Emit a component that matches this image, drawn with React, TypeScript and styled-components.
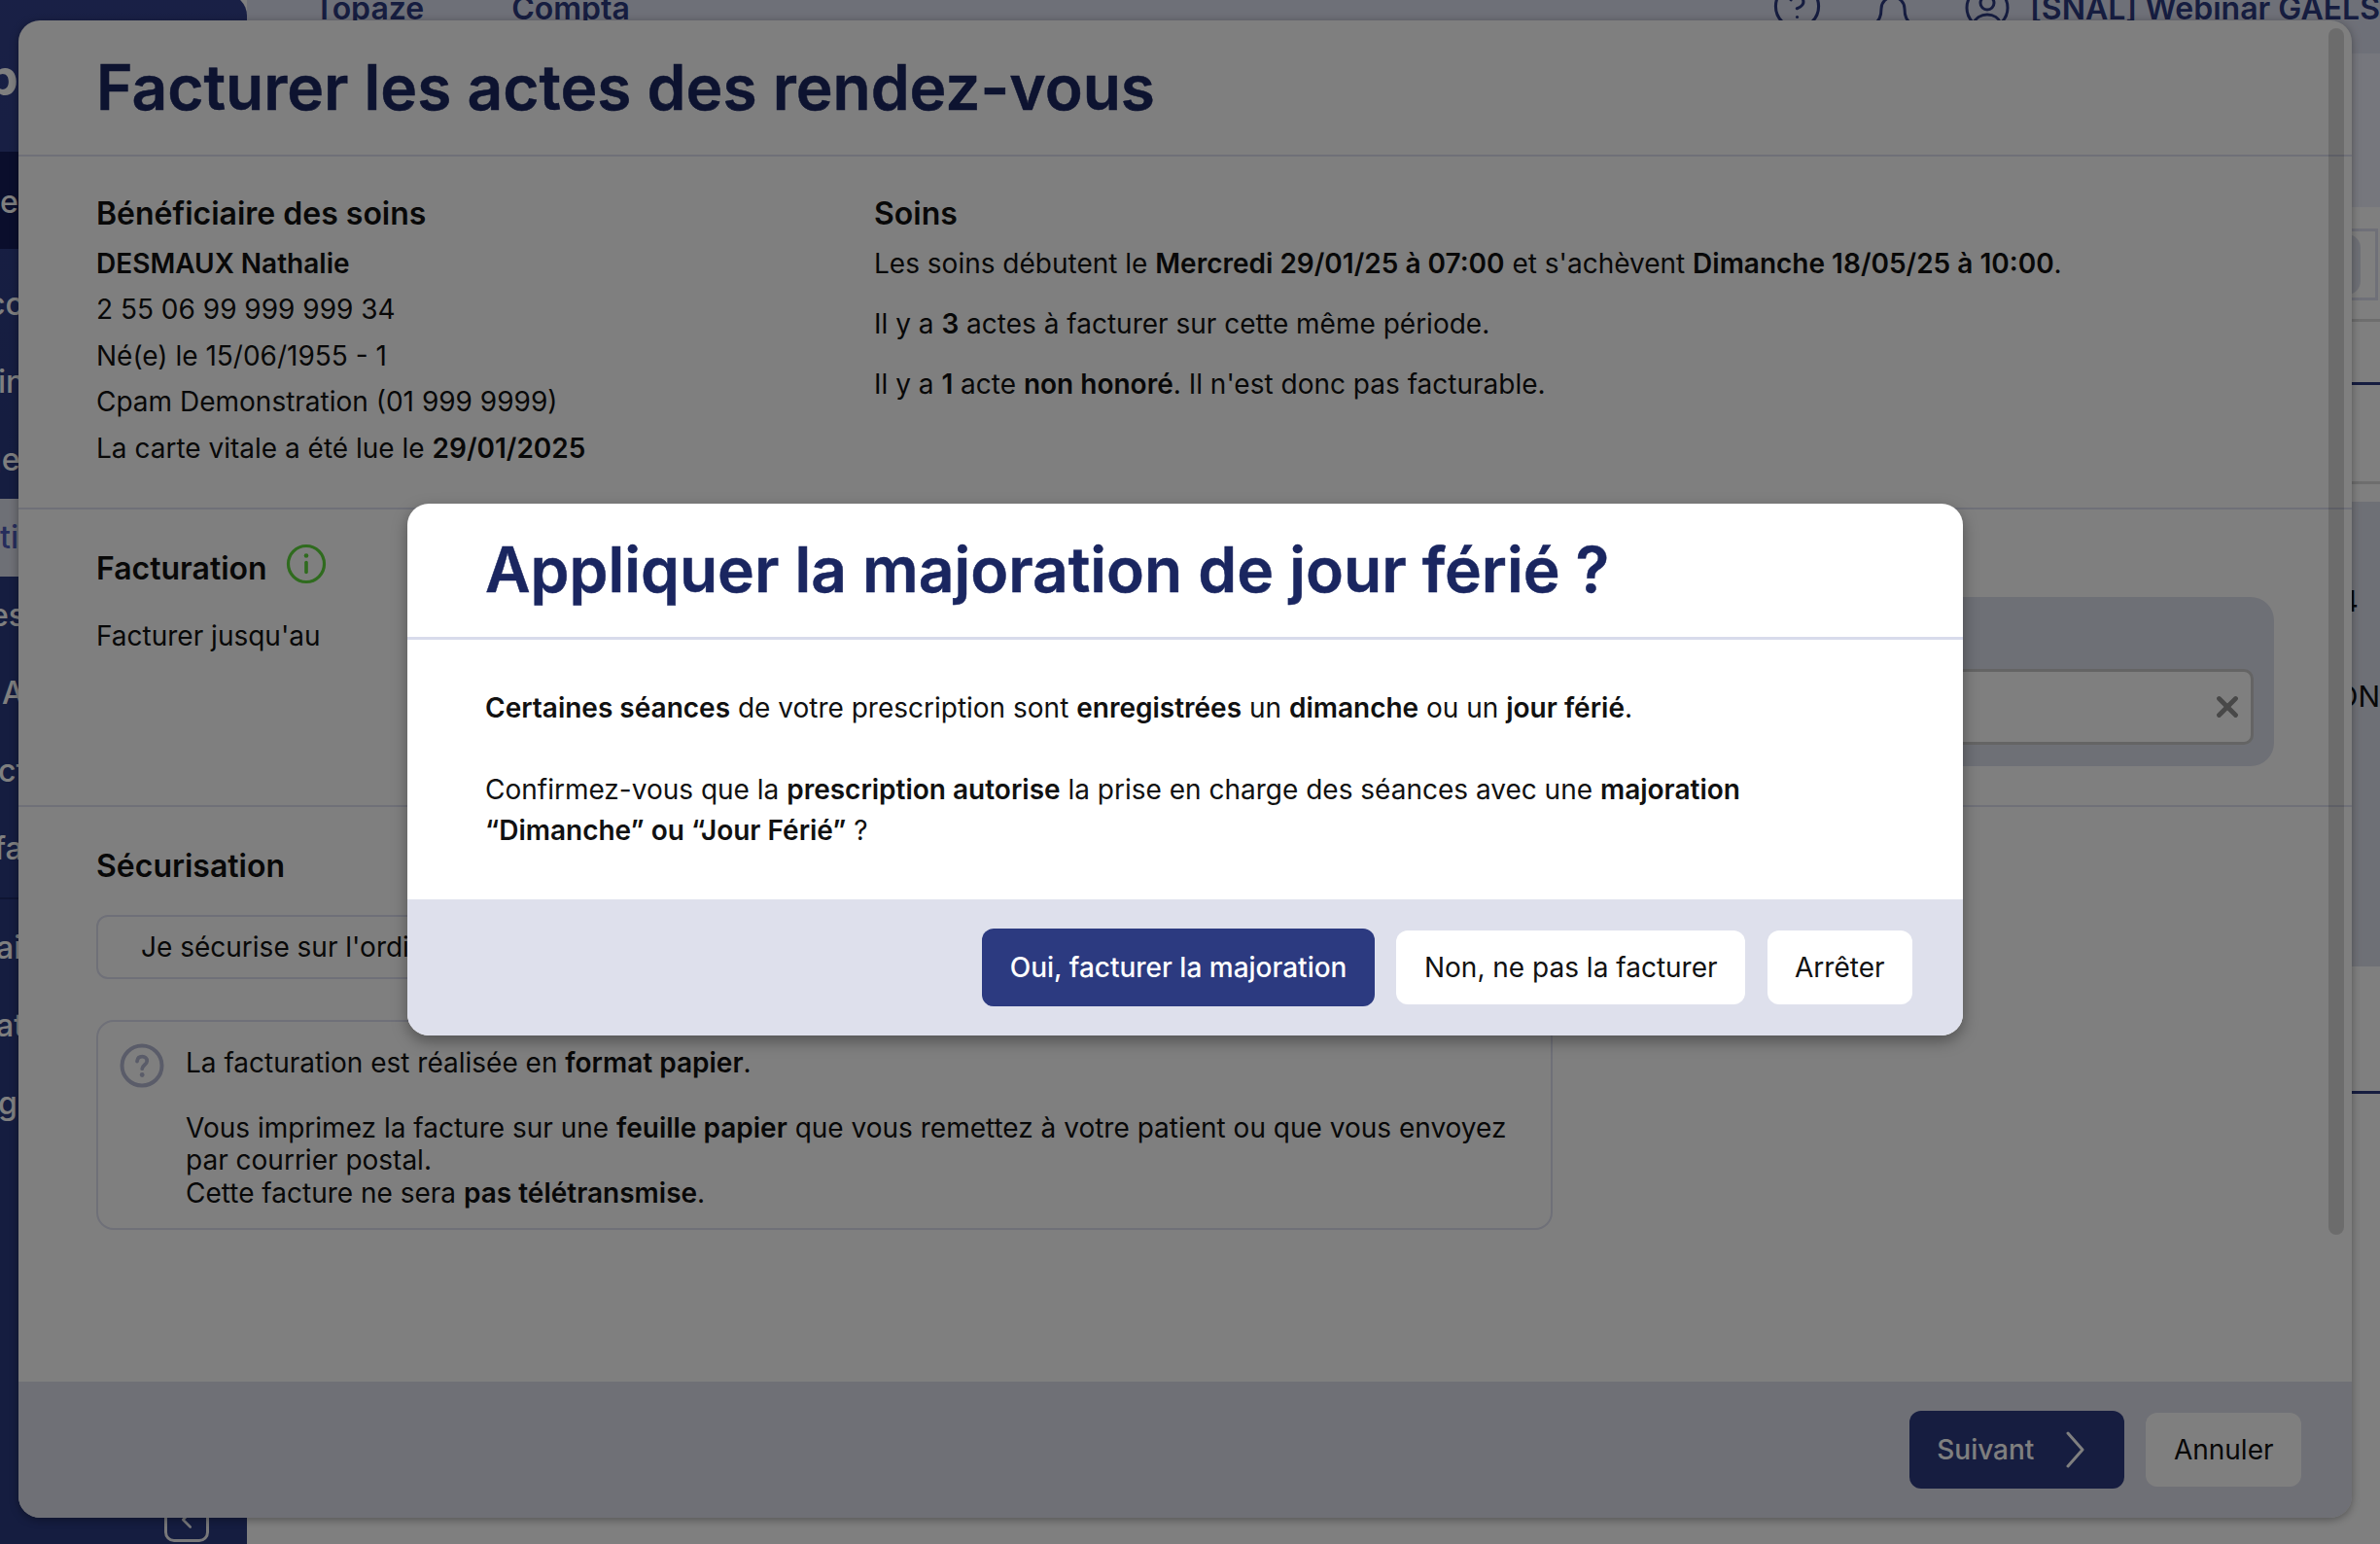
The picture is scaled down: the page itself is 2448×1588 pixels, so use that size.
import React from "react";
import styled, { createGlobalStyle } from "styled-components";
import { Bell, ChevronLeft, CircleHelp, X } from "lucide-react";

const GlobalStyle = createGlobalStyle`
  html, body {
    margin: 0;
    padding: 0;
    background: #fff;
  }
  * {
    box-sizing: border-box;
  }
  body {
    font-family: "Inter", "Liberation Sans", sans-serif;
    color: #111;
  }
`;

const Page = styled.div`
  position: relative;
  display: flex;
  width: 2448px;
  height: 1588px;
  overflow: hidden;
  background: #fff;
`;

/* ---- page behind the modal ---- */

const Sidebar = styled.nav`
  flex: 0 0 254px;
  display: flex;
  flex-direction: column;
  height: 1594px;
  margin-top: -6px;
  background: linear-gradient(#33418c, #2a3a80 30%);
  border-top-right-radius: 22px;
  color: #fff;
  font-size: 32px;
  font-weight: 500;
`;

const Brand = styled.div`
  display: flex;
  align-items: flex-start;
  height: 162px;
  padding-top: 58px;
  font-size: 52px;
  font-weight: 700;
  line-height: 56px;
  text-indent: -14px;
`;

const BrandEdge = styled.span`
  width: 6px;
  height: 38px;
  margin: 14px 0 0 3px;
  border-radius: 3px 0 0 3px;
  background: #c8cad2;
`;

const NavActive = styled.div`
  height: 100px;
  margin-bottom: 17px;
  padding-top: 30px;
  background: #141c58;
  line-height: 44px;
`;

const NavItem = styled.div<{ $indent?: number; $light?: boolean }>`
  height: 80px;
  line-height: 80px;
  text-indent: ${(p) => p.$indent ?? 0}px;
  white-space: nowrap;
  background: ${(p) => (p.$light ? "#dde0ec" : "transparent")};
  color: ${(p) => (p.$light ? "#4d5bb8" : "#fff")};
`;

const NavRule = styled.div`
  height: 2px;
  margin: 10px 0;
  background: #1e2a66;
`;

const CollapseButton = styled.div`
  display: flex;
  align-items: center;
  justify-content: center;
  width: 46px;
  height: 46px;
  margin: auto 0 2px 169px;
  border: 3px solid #f0f0f4;
  border-radius: 10px;
`;

const Main = styled.main`
  flex: 1;
  min-width: 0;
  display: flex;
  flex-direction: column;
`;

const TopBar = styled.header`
  flex: 0 0 55px;
  display: flex;
  align-items: center;
  height: 55px;
  padding: 0 0 38px 69px;
  background: #dde0f0;
  color: #2c3a80;
  font-size: 32px;
  font-weight: 600;
  white-space: nowrap;
`;

const TopLink = styled.span`
  margin-right: 90px;
`;

const TopIcons = styled.div`
  flex-shrink: 0;
  display: flex;
  align-items: center;
  margin-left: 1084px;
`;

const TopIcon = styled.span<{ $gap: number; $drop: number }>`
  display: flex;
  margin-top: ${(p) => p.$drop}px;
  margin-right: ${(p) => p.$gap}px;
`;

const PatientBar = styled.div`
  flex: 0 0 158px;
  background: #eceefa;
`;

const Toolbar = styled.div`
  flex: 0 0 118px;
  display: flex;
  justify-content: flex-end;
  padding: 22px 2px 0 0;
  border-bottom: 3px solid #dcdcdc;
`;

const ToolBox = styled.div`
  width: 446px;
  height: 74px;
  padding: 3px;
  border: 3px solid #dee0f0;
`;

const ToolButton = styled.div`
  width: 422px;
  height: 62px;
  border-radius: 14px;
  background: #dde0ec;
`;

const Rule = styled.div<{ $top: number; $color: string }>`
  flex: 0 0 3px;
  margin-top: ${(p) => p.$top}px;
  background: ${(p) => p.$color};
`;

const SidePanel = styled.section`
  flex: 0 0 478px;
  margin-top: 18px;
  padding-top: 84px;
  background: #dde0ec;
  color: #111;
  font-size: 30px;
`;

const SideValue = styled.div<{ $right: number }>`
  height: 36px;
  margin-bottom: 62px;
  margin-right: ${(p) => p.$right}px;
  line-height: 36px;
  text-align: right;
`;

/* ---- big modal ---- */

const BillingModal = styled.div`
  position: absolute;
  top: 21px;
  left: 19px;
  display: flex;
  flex-direction: column;
  width: 2400px;
  height: 1540px;
  border-radius: 22px;
  background: #fff;
  box-shadow: 0 2px 10px rgba(0, 0, 0, 0.35);
  overflow: hidden;
`;

const ScrollThumb = styled.div`
  position: absolute;
  top: 8px;
  right: 8px;
  width: 16px;
  height: 1241px;
  border-radius: 8px;
  background: rgba(0, 0, 0, 0.15);
`;

const ModalHeader = styled.div`
  flex: 0 0 140px;
  padding: 41px 0 0 80px;
  border-bottom: 2px solid #dee0f0;
`;

const BillingTitle = styled.h1`
  margin: 0;
  color: #1a2660;
  font-size: 64px;
  font-weight: 600;
  line-height: 56px;
  -webkit-text-stroke: 0.5px #1a2660;
`;

const Section = styled.section<{ $height: number }>`
  flex: 0 0 ${(p) => p.$height}px;
  display: flex;
  padding: 37px 80px 0 80px;
  border-bottom: 2px solid #dee0f0;
  font-size: 28px;
`;

const Column = styled.div<{ $width?: number; $top?: number }>`
  flex: 0 0 ${(p) => (p.$width ? `${p.$width}px` : "auto")};
  margin-top: ${(p) => p.$top ?? 0}px;
`;

const SectionTitle = styled.h2`
  display: flex;
  align-items: center;
  gap: 19px;
  margin: 0;
  color: #111;
  font-size: 32px;
  font-weight: 600;
  line-height: 44px;
`;

const InfoLine = styled.div`
  height: 47.6px;
  line-height: 47.6px;
  white-space: nowrap;
  &:first-of-type {
    margin-top: 5.5px;
  }
`;

const CareLine = styled.p`
  margin: 7px 0 0;
  line-height: 44px;
  white-space: nowrap;
  & + & {
    margin-top: 18px;
  }
`;

const Strong = styled.b`
  font-weight: 600;
`;

const PlainLabel = styled.div`
  margin-top: 25.5px;
  line-height: 44px;
`;

const DatePanel = styled.div`
  flex: 0 0 1240px;
  height: 174px;
  margin: 53px 0 0 auto;
  padding: 74px 21px 0 0;
  border-radius: 24px;
  background: #dde0ec;
`;

const DateInput = styled.div`
  display: flex;
  align-items: center;
  justify-content: flex-end;
  height: 78px;
  padding-right: 7px;
  border: 3px solid #c8c8c8;
  border-radius: 10px;
  background: #fff;
`;

const ModalBody = styled.div`
  flex: 1;
  padding: 38.5px 0 0 80px;
  font-size: 28px;
`;

const ModeSelect = styled.div`
  width: 1498px;
  height: 66px;
  margin-top: 28.5px;
  padding-left: 44px;
  border: 2px solid #dee0f0;
  border-radius: 12px;
  line-height: 62px;
`;

const Notice = styled.div`
  display: flex;
  gap: 22px;
  width: 1498px;
  height: 216px;
  margin-top: 42px;
  padding: 22px 0 0 22px;
  border: 2px solid #dee0f0;
  border-radius: 18px;
  line-height: 33.6px;
`;

const NoticeText = styled.div`
  padding-top: 3.5px;
  white-space: nowrap;
`;

const ModalFooter = styled.div`
  flex: 0 0 140px;
  display: flex;
  align-items: center;
  justify-content: flex-end;
  gap: 22px;
  padding-right: 52px;
  background: #dee0ec;
`;

const Button = styled.button<{ $primary?: boolean; $chevron?: boolean }>`
  display: flex;
  align-items: center;
  height: ${(p) => (p.$primary ? 80 : 76)}px;
  padding: 0 ${(p) => (p.$chevron ? 40 : 28.5)}px 0 28.5px;
  border: 0;
  border-radius: 12px;
  background: ${(p) => (p.$primary ? "#2c3a80" : "#fff")};
  color: ${(p) => (p.$primary ? "#fff" : "#111")};
  font-family: inherit;
  font-size: 28px;
  font-weight: ${(p) => (p.$primary ? 500 : 400)};
  white-space: nowrap;
`;

const NextChevron = styled.svg`
  margin-left: 33px;
`;

/* ---- top dialog ---- */

const Overlay = styled.div`
  position: absolute;
  inset: 0;
  background: rgba(0, 0, 0, 0.5);
`;

const Dialog = styled.div`
  position: absolute;
  top: 518px;
  left: 419px;
  width: 1600px;
  height: 547px;
  border-radius: 22px;
  background: #fff;
  box-shadow: 0 6px 16px rgba(0, 0, 0, 0.35);
  overflow: hidden;
`;

const DialogHeader = styled.div`
  height: 140px;
  padding: 40px 0 0 80px;
  border-bottom: 3px solid #d8dbeb;
`;

const DialogBody = styled.div`
  height: 267px;
  padding: 49px 120px 0 80px;
  font-size: 28px;
  line-height: 42px;
  color: #111;
`;

const DialogFooter = styled.div`
  display: flex;
  align-items: center;
  justify-content: flex-end;
  gap: 22.5px;
  height: 140px;
  padding-right: 52px;
  background: #dee0ec;
`;

const navTop = [
  { label: "cc", indent: -13 },
  { label: "in", indent: -2 },
  { label: "ge", indent: -18 },
  { label: "ti", indent: 0, light: true },
  { label: "es", indent: -10 },
  { label: "A", indent: 2 },
  { label: "ct", indent: -2 },
  { label: "fa", indent: -6 },
];

const navBottom = [
  { label: "ai", indent: -4 },
  { label: "at", indent: -4 },
  { label: "g", indent: -2 },
];

function HelpMark() {
  return (
    <svg width="46" height="46" viewBox="0 0 46 46" fill="none" stroke="#b4b8d2">
      <circle cx="23" cy="23" r="20.5" strokeWidth="4" />
      <path
        d="M18 18.5c.4-3 2.5-4.8 5.2-4.8 3 0 5 1.9 5 4.5 0 3.8-5 4.2-5 8"
        strokeWidth="3.8"
        strokeLinecap="round"
      />
      <circle cx="23.2" cy="32.5" r="2.4" fill="#b4b8d2" stroke="none" />
    </svg>
  );
}

function UserMark() {
  return (
    <svg width="46" height="46" viewBox="0 0 46 46" fill="none" stroke="currentColor" strokeWidth="3">
      <circle cx="23" cy="23" r="21" />
      <circle cx="23" cy="18" r="7" />
      <path d="M9 39c2-5.5 7.5-9 14-9s12 3.5 14 9" strokeLinecap="round" />
    </svg>
  );
}

const InfoIconSlot = styled.span`
  display: flex;
  margin-top: -10px;
`;

function InfoMark() {
  return (
    <InfoIconSlot>
      <svg width="42" height="42" viewBox="0 0 42 42" fill="none" stroke="#5ed63c">
        <circle cx="21" cy="21" r="18.5" strokeWidth="3.2" />
        <path d="M21 19.5v10" strokeWidth="3.6" strokeLinecap="round" />
        <circle cx="21" cy="12.5" r="2.3" fill="#5ed63c" stroke="none" />
      </svg>
    </InfoIconSlot>
  );
}

export default function App() {
  return (
    <Page>
      <GlobalStyle />

      <Sidebar>
        <Brand>
          p<BrandEdge />
        </Brand>
        <NavActive>e</NavActive>
        {navTop.map((item) => (
          <NavItem key={item.label} $indent={item.indent} $light={item.light}>
            {item.label}
          </NavItem>
        ))}
        <NavRule />
        {navBottom.map((item) => (
          <NavItem key={item.label} $indent={item.indent}>
            {item.label}
          </NavItem>
        ))}
        <CollapseButton>
          <ChevronLeft size={30} strokeWidth={2} color="#f0f0f4" />
        </CollapseButton>
      </Sidebar>

      <Main>
        <TopBar>
          <TopLink>Topaze</TopLink>
          <TopLink>Compta</TopLink>
          <TopIcons>
            <TopIcon $gap={48} $drop={-5}>
              <CircleHelp size={53} strokeWidth={1.4} />
            </TopIcon>
            <TopIcon $gap={50} $drop={17}>
              <Bell size={48} strokeWidth={1.5} />
            </TopIcon>
            <TopIcon $gap={21} $drop={-1}>
              <UserMark />
            </TopIcon>
            <span>[SNAL] Webinar GAELS</span>
          </TopIcons>
        </TopBar>
        <PatientBar />
        <Toolbar>
          <ToolBox>
            <ToolButton />
          </ToolBox>
        </Toolbar>
        <Rule $top={62} $color="#2c3a80" />
        <Rule $top={99} $color="#dcdcdc" />
        <SidePanel>
          <SideValue $right={22}>4</SideValue>
          <SideValue $right={0}>ON</SideValue>
        </SidePanel>
        <Rule $top={128} $color="#2c3a80" />
      </Main>

      <BillingModal>
        <ModalHeader>
          <BillingTitle>Facturer les actes des rendez-vous</BillingTitle>
        </ModalHeader>

        <Section $height={363}>
          <Column $width={800}>
            <SectionTitle>Bénéficiaire des soins</SectionTitle>
            <InfoLine>
              <Strong>DESMAUX Nathalie</Strong>
            </InfoLine>
            <InfoLine>2 55 06 99 999 999 34</InfoLine>
            <InfoLine>Né(e) le 15/06/1955 - 1</InfoLine>
            <InfoLine>Cpam Demonstration (01 999 9999)</InfoLine>
            <InfoLine>
              La carte vitale a été lue le <Strong>29/01/2025</Strong>
            </InfoLine>
          </Column>
          <Column>
            <SectionTitle>Soins</SectionTitle>
            <CareLine>
              Les soins débutent le <Strong>Mercredi 29/01/25 à 07:00</Strong> et s'achèvent{" "}
              <Strong>Dimanche 18/05/25 à 10:00</Strong>.
            </CareLine>
            <CareLine>
              Il y a <Strong>3</Strong> actes à facturer sur cette même période.
            </CareLine>
            <CareLine>
              Il y a <Strong>1</Strong> acte <Strong>non honoré</Strong>. Il n'est donc pas
              facturable.
            </CareLine>
          </Column>
        </Section>

        <Section $height={306}>
          <Column $top={1.5}>
            <SectionTitle>
              Facturation <InfoMark />
            </SectionTitle>
            <PlainLabel>Facturer jusqu'au</PlainLabel>
          </Column>
          <DatePanel>
            <DateInput>
              <X size={34} strokeWidth={3.4} color="#909090" />
            </DateInput>
          </DatePanel>
        </Section>

        <ModalBody>
          <SectionTitle>Sécurisation</SectionTitle>
          <ModeSelect>Je sécurise sur l'ordinateur</ModeSelect>
          <Notice>
            <HelpMark />
            <NoticeText>
              La facturation est réalisée en <Strong>format papier</Strong>.
              <br />
              <br />
              Vous imprimez la facture sur une <Strong>feuille papier</Strong> que vous remettez à
              votre patient ou que vous envoyez
              <br />
              par courrier postal.
              <br />
              Cette facture ne sera <Strong>pas télétransmise</Strong>.
            </NoticeText>
          </Notice>
        </ModalBody>

        <ModalFooter>
          <Button $primary $chevron>
            Suivant
            <NextChevron width="20" height="38" viewBox="0 0 20 38" fill="none">
              <path
                d="M2 2l15 17L2 36"
                stroke="#fff"
                strokeWidth="3"
                strokeLinecap="round"
                strokeLinejoin="round"
              />
            </NextChevron>
          </Button>
          <Button>Annuler</Button>
        </ModalFooter>

        <ScrollThumb />
      </BillingModal>

      <Overlay />

      <Dialog>
        <DialogHeader>
          <BillingTitle>Appliquer la majoration de jour férié ?</BillingTitle>
        </DialogHeader>
        <DialogBody>
          <Strong>Certaines séances</Strong> de votre prescription sont{" "}
          <Strong>enregistrées</Strong> un <Strong>dimanche</Strong> ou un{" "}
          <Strong>jour férié</Strong>.
          <br />
          <br />
          Confirmez-vous que la <Strong>prescription autorise</Strong> la prise en charge des
          séances avec une <Strong>majoration “Dimanche” ou “Jour Férié”</Strong> ?
        </DialogBody>
        <DialogFooter>
          <Button $primary>Oui, facturer la majoration</Button>
          <Button>Non, ne pas la facturer</Button>
          <Button>Arrêter</Button>
        </DialogFooter>
      </Dialog>
    </Page>
  );
}
